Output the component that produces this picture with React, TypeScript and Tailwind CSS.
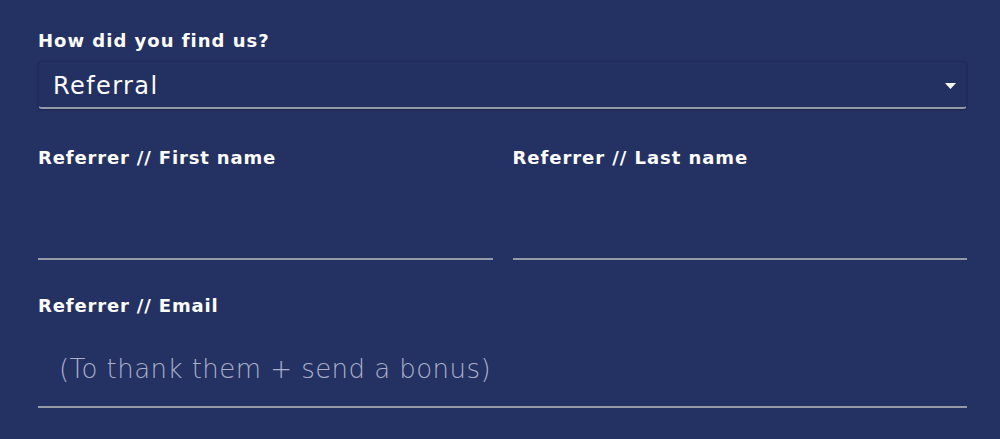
export default function App() {
  return (
    <div className="min-h-screen w-full bg-[#243163] font-['DejaVu_Sans',sans-serif] text-white">
      <form className="flex flex-col pl-[38px] pr-[33px] pt-[29px]">
        {/* How did you find us */}
        <label className="text-[18px] font-bold leading-[24px] tracking-[1px]">How did you find us?</label>
        <div className="relative mt-[8px] flex h-[48px] items-center rounded-[4px] border border-[#1f2a56] border-b-2 border-b-[#959aa6] bg-[#233062] pl-[14px] pt-[3px] shadow-[0_1px_2px_rgba(0,0,0,0.25)]">
          <span className="text-[24px] font-normal leading-none tracking-[1.4px]">Referral</span>
          <svg className="absolute right-[10px] top-[21px]" width="11" height="6" viewBox="0 0 11 6">
            <path d="M0 0 L11 0 L5.5 6 Z" fill="#ffffff" />
          </svg>
        </div>

        {/* Referrer names */}
        <div className="mt-[37px] grid grid-cols-2 gap-x-[20px]">
          <div className="flex flex-col">
            <label className="text-[18px] font-bold leading-[24px] tracking-[0.85px]">Referrer // First name</label>
            <input className="h-[90px] border-b-2 border-[#959aa6] bg-transparent text-[24px] outline-none" />
          </div>
          <div className="flex flex-col">
            <label className="text-[18px] font-bold leading-[24px] tracking-[0.95px]">Referrer // Last name</label>
            <input className="h-[90px] border-b-2 border-[#959aa6] bg-transparent text-[24px] outline-none" />
          </div>
        </div>

        {/* Email */}
        <div className="mt-[34px] flex flex-col">
          <label className="text-[18px] font-bold leading-[24px] tracking-[0.85px]">Referrer // Email</label>
          <input
            placeholder="(To thank them + send a bonus)"
            className="h-[90px] border-b-2 border-[#959aa6] bg-transparent pl-[21px] pt-[14px] text-[26px] font-extralight tracking-[0.45px] outline-none placeholder:text-[#aab0c8]"
          />
        </div>
      </form>
    </div>
  )
}
